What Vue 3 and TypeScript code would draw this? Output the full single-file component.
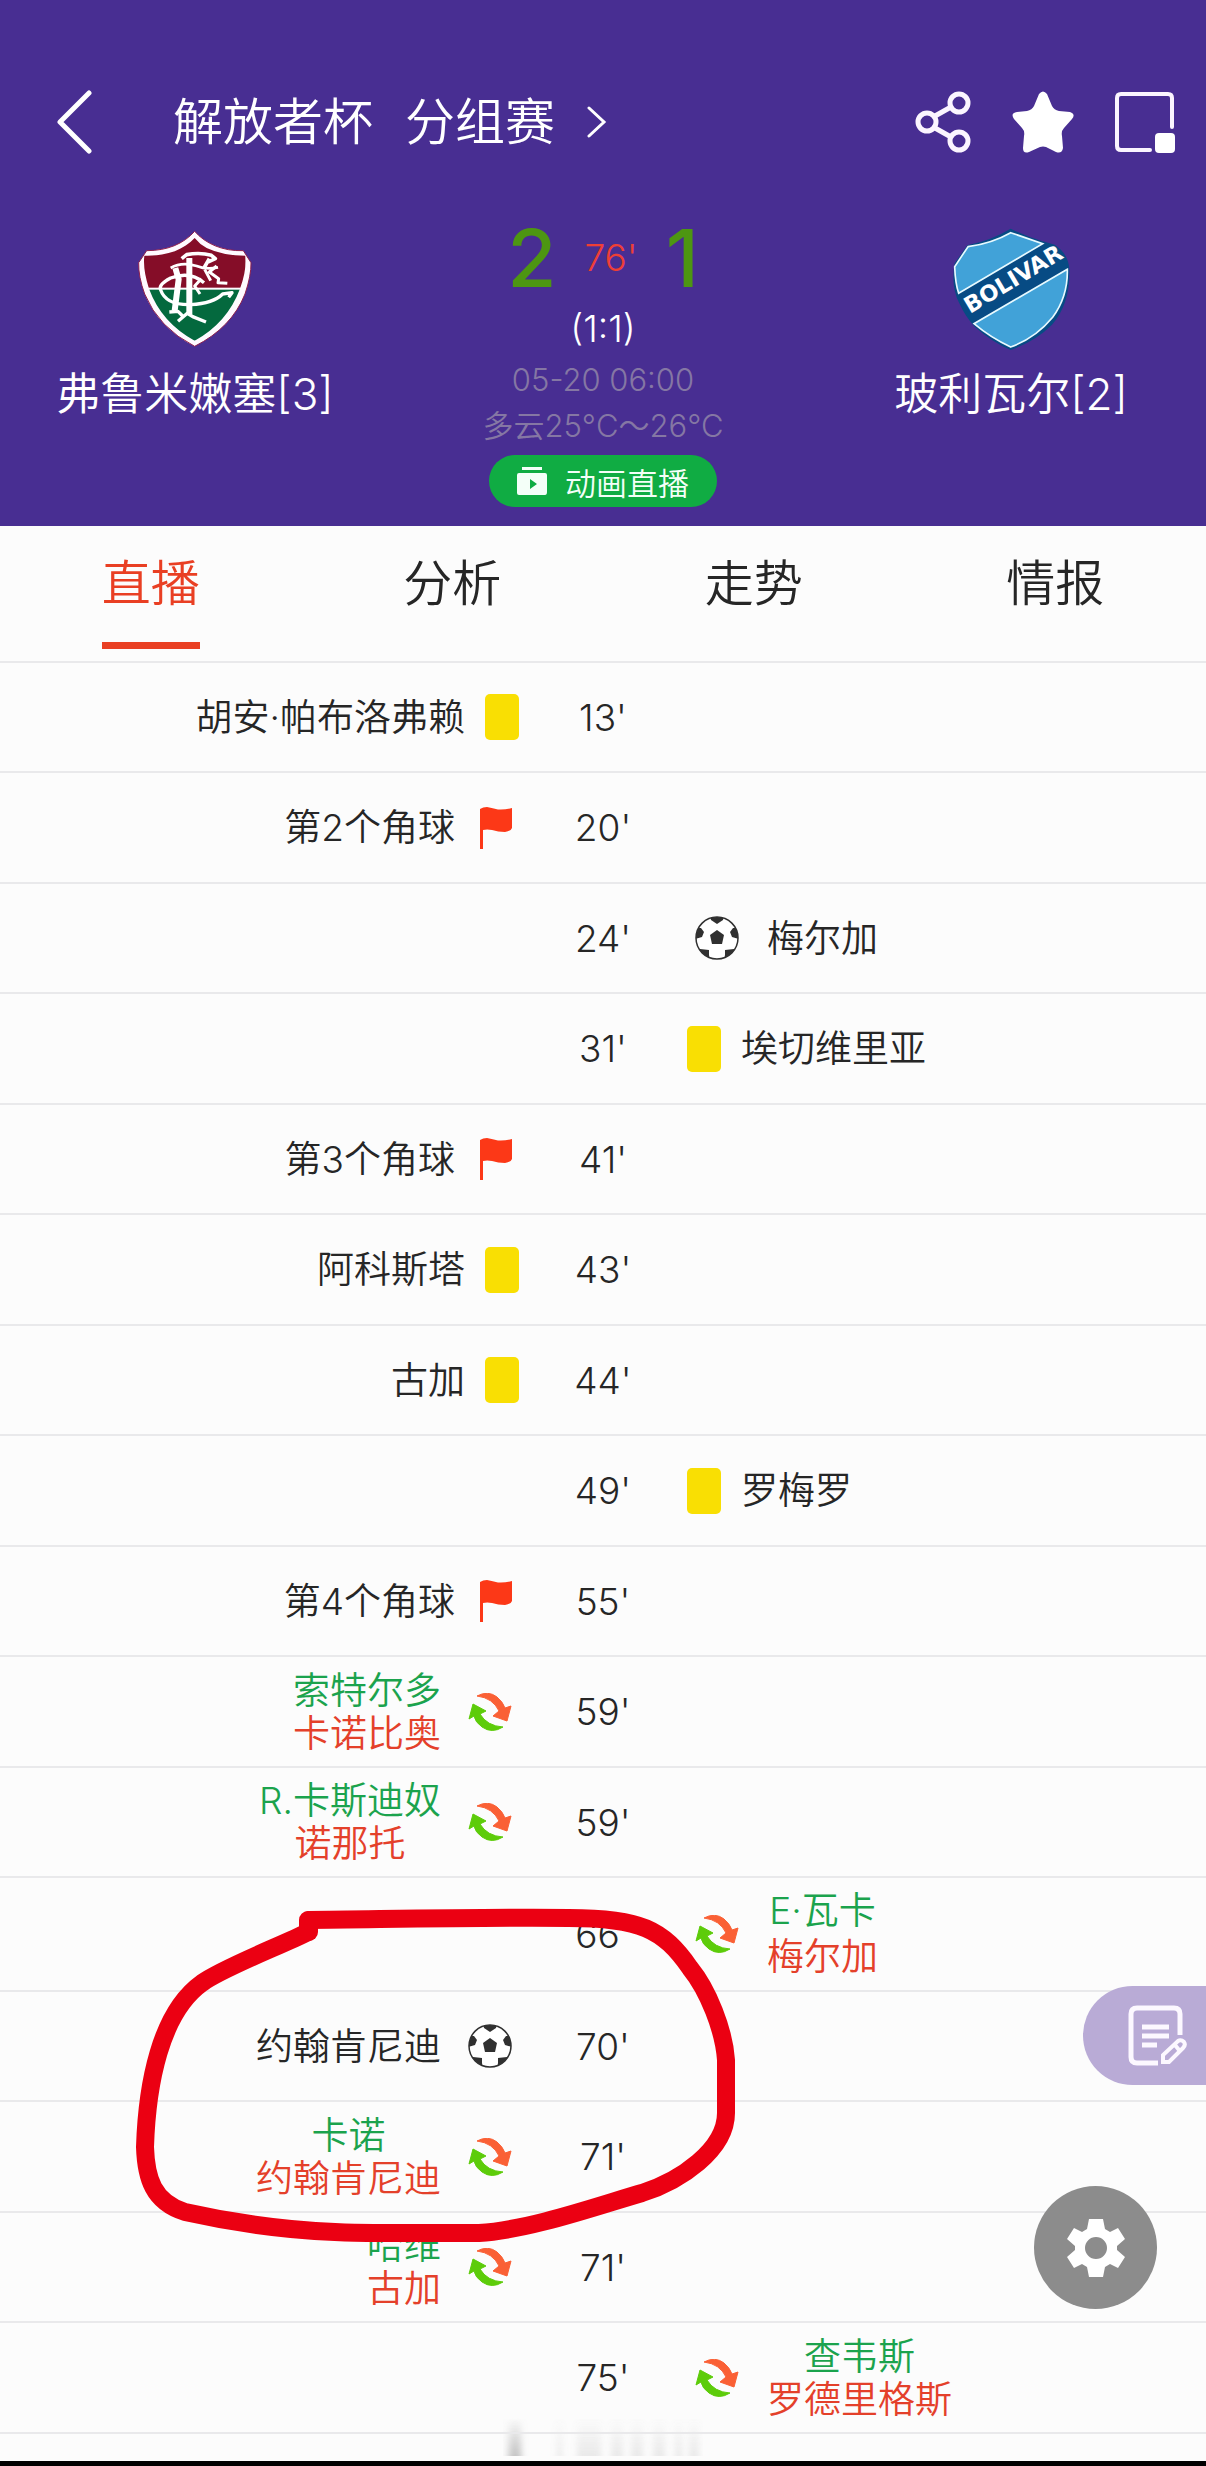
<script setup lang="ts">
import { ref } from 'vue'

type Kind = 'card' | 'corner' | 'goal' | 'sub'

interface MatchEvent {
  minute: number
  side: 'home' | 'away'
  kind: Kind
  text: string
  off?: string
  tall?: boolean
}

const tabs = ['直播', '分析', '走势', '情报']
const activeTab = ref(0)

const events: MatchEvent[] = [
  { minute: 13, side: 'home', kind: 'card', text: '胡安·帕布洛弗赖' },
  { minute: 20, side: 'home', kind: 'corner', text: '第2个角球' },
  { minute: 24, side: 'away', kind: 'goal', text: '梅尔加' },
  { minute: 31, side: 'away', kind: 'card', text: '埃切维里亚' },
  { minute: 41, side: 'home', kind: 'corner', text: '第3个角球' },
  { minute: 43, side: 'home', kind: 'card', text: '阿科斯塔' },
  { minute: 44, side: 'home', kind: 'card', text: '古加' },
  { minute: 49, side: 'away', kind: 'card', text: '罗梅罗' },
  { minute: 55, side: 'home', kind: 'corner', text: '第4个角球' },
  { minute: 59, side: 'home', kind: 'sub', text: '索特尔多', off: '卡诺比奥' },
  { minute: 59, side: 'home', kind: 'sub', text: 'R.卡斯迪奴', off: '诺那托' },
  { minute: 66, side: 'away', kind: 'sub', text: 'E·瓦卡', off: '梅尔加', tall: true },
  { minute: 70, side: 'home', kind: 'goal', text: '约翰肯尼迪' },
  { minute: 71, side: 'home', kind: 'sub', text: '卡诺', off: '约翰肯尼迪' },
  { minute: 71, side: 'home', kind: 'sub', text: '哈维', off: '古加' },
  { minute: 75, side: 'away', kind: 'sub', text: '查韦斯', off: '罗德里格斯' },
]
</script>

<template>
  <div class="page">
    <header class="hero">
      <nav class="bar">
        <button class="icon-btn back" aria-label="返回">
          <svg width="36" height="64" viewBox="0 0 36 64"><path d="M33 3 4 32 33 61" fill="none" stroke="#fff" stroke-width="5" stroke-linecap="round" stroke-linejoin="round" /></svg>
        </button>
        <a class="title" href="#">
          <span>解放者杯</span>
          <span>分组赛</span>
          <svg width="20" height="32" viewBox="0 0 20 32"><path d="M2 2 17 16 2 30" fill="none" stroke="#fff" stroke-width="3" stroke-linecap="round" /></svg>
        </a>
        <div class="tools">
          <button class="icon-btn" aria-label="分享">
            <svg width="56" height="62" viewBox="0 0 56 62" fill="none" stroke="#fbf5ff" stroke-width="5">
              <path d="M20 25 36 16M20 37 36 46" />
              <circle cx="12" cy="31" r="9" /><circle cx="44" cy="12" r="9" /><circle cx="44" cy="50" r="9" />
            </svg>
          </button>
          <button class="icon-btn" aria-label="收藏">
            <svg width="62" height="62" viewBox="0 0 62 62"><path d="M27 3Q31-2 35 3L40 15Q42 19 47 20L58 21Q64 23 60 28L52 37Q49 40 50 45L51 57Q50 63 44 61L34 56Q31 55 28 56L17 61Q11 63 11 57L12 45Q13 40 10 37L2 28Q-2 22 5 21L15 20Q20 19 22 15Z" fill="#fff" /></svg>
          </button>
          <button class="icon-btn" aria-label="小窗">
            <svg width="60" height="62" viewBox="0 0 60 62"><path d="M57 36V7Q57 3 53 3H6Q2 3 2 7V55Q2 59 6 59H35" fill="none" stroke="#fbf5ff" stroke-width="4" stroke-linecap="round" /><rect x="40" y="42" width="20" height="20" rx="4" fill="#fff" /></svg>
          </button>
        </div>
      </nav>

      <div class="match">
        <div class="team">
          <svg width="116" height="118" viewBox="411 92 348 354">
            <defs>
              <clipPath id="fluClip"><path d="M584 116C551 152 499 171 433 169Q428 210 447 268 484 369 584 424 682 370 720 268 741 210 736 169 668 169 620 146 598 134 584 116Z" /></clipPath>
            </defs>
            <path d="M584 96C550 134 502 154 440 154L416 190Q415 232 434 284 476 386 584 441 695 385 735 284 754 228 753 190L730 154C668 156 616 133 584 96Z" fill="#fffaff" stroke="#90204d" stroke-width="3" />
            <g clip-path="url(#fluClip)">
              <rect x="411" y="92" width="348" height="173" fill="#850d28" />
              <rect x="411" y="271" width="348" height="180" fill="#04693e" />
            </g>
            <g fill="none" stroke="#fff" stroke-linejoin="round">
              <path d="M568 176V346M526 206 536 240 524 334" stroke-width="18" />
              <path d="M545 178 560 166Q600 158 634 168L646 178 620 190M628 178 612 206" stroke-width="11" />
              <path d="M512 206Q545 186 590 200 620 212 654 204" stroke-width="8" />
              <path d="M508 338 534 336 548 350M534 366 562 342 578 352 618 368" stroke-width="10" />
              <path d="M612 250Q570 214 512 236 474 256 482 272 498 318 572 316 640 312 668 284L696 280 686 294" stroke-width="10" />
              <path d="M604 238 584 260 600 284M614 210 632 244M650 200 628 218 656 238 654 250 682 252" stroke-width="9" />
            </g>
          </svg>
          <span class="name">弗鲁米嫩塞[3]</span>
        </div>

        <div class="center">
          <div class="score">
            <b>2</b><span class="clock">76'</span><b>1</b>
          </div>
          <div class="half">(1:1)</div>
          <div class="meta">05-20 06:00</div>
          <div class="meta">多云25°C～26°C</div>
          <button class="live">
            <svg width="30" height="28" viewBox="0 0 30 28"><path d="M5 0H25V3H5ZM2 6H28Q30 6 30 8V25Q30 28 28 28H2Q0 28 0 26V8Q0 6 2 6ZM13 12V22L20 17Z" fill="#f4fff8" fill-rule="evenodd" /></svg>
            动画直播
          </button>
        </div>

        <div class="team">
          <svg width="118" height="122" viewBox="280 84 354 366">
            <path d="M456 86Q400 120 326 136L288 190Q276 260 302 310 320 350 348 380 400 426 456 450 530 424 580 374 636 310 632 206 628 160 588 134L552 124Q500 108 456 86Z" fill="#074b84" />
            <path d="M456 98 552 131 300 280Q290 250 288 200L328 140Q400 130 456 98Z" fill="#41a2d8" stroke="#e8faff" stroke-width="5" />
            <path d="M626 208 346 371Q396 413 456 441 530 415 582 352 628 290 626 208Z" fill="#41a2d8" stroke="#e8faff" stroke-width="5" />
            <text x="334" y="342" transform="rotate(-31 334 342)" class="crest-word">BOLIVAR</text>
          </svg>
          <span class="name">玻利瓦尔[2]</span>
        </div>
      </div>
    </header>

    <nav class="tabs">
      <button
        v-for="(tab, i) in tabs"
        :key="tab"
        class="tab"
        :class="{ active: i === activeTab }"
        @click="activeTab = i"
      >
        <span>{{ tab }}</span>
      </button>
    </nav>

    <main class="timeline">
      <ol class="rows">
        <li v-for="(ev, i) in events" :key="i" class="row" :class="[ev.side, { tall: ev.tall }]">
          <div class="entry" :class="ev.kind">
            <div class="who">
              <span :class="{ on: ev.off }">{{ ev.text }}</span>
              <span v-if="ev.off" class="off">{{ ev.off }}</span>
            </div>
            <i v-if="ev.kind === 'card'" class="yellow" />
            <svg v-else-if="ev.kind === 'corner'" width="32" height="42" viewBox="0 0 32 42"><path d="M0 2Q3 0 7 0 13 1 18 2.500 25 3 32 1V21Q31 24 25 25 18 25 12 23 7 22 3 23V42H0Z" fill="#fc3817" /></svg>
            <svg v-else-if="ev.kind === 'goal'" width="44" height="44" viewBox="0 0 44 44">
              <defs><clipPath id="ballClip"><circle cx="22" cy="22" r="21" /></clipPath></defs>
              <circle cx="22" cy="22" r="21" fill="#fff" />
              <g clip-path="url(#ballClip)" fill="#303030">
                <path d="M22 14 29 19 27 28H17L15 19Z" />
                <path d="M15 0H29L28 4 22 8 16 4Z" />
                <path d="M0 12 6 12 9 16 7 21 0 23ZM44 12 38 12 35 16 37 21 44 23ZM5 33 14 34 14 39 15 44 5 42ZM39 33 30 34 30 39 29 44 39 42Z" />
              </g>
              <circle cx="22" cy="22" r="21" fill="none" stroke="#303030" stroke-width="1.500" />
            </svg>
            <svg v-else width="44" height="38" viewBox="0 0 44 38">
              <path d="M9 3Q20-3 29 4 35 9 37 15L43 13 39 28 25 23 31 18Q25 5 9 3Z" fill="#fa6035" stroke="#fa6035" stroke-linejoin="round" />
              <path d="M35 34Q24 41 14 34 7 29 6 23L1 26 5 11 18 18 12 21Q19 33 35 34Z" fill="#5dcc0a" stroke="#5dcc0a" stroke-linejoin="round" />
            </svg>
          </div>
          <time class="minute">{{ ev.minute }}'</time>
        </li>
      </ol>

      <svg class="marker" width="620" height="360" viewBox="130 1900 620 360">
        <path d="M308 1932C285 1944 222 1968 202 1983 160 2013 147 2085 145 2147 146 2178 153 2202 185 2212 225 2221 270 2227 291 2229 330 2233 360 2233 398 2233H479C530 2230 600 2205 642 2193 680 2181 726 2150 726 2113V2060C724 2030 708 1990 690 1968 663 1929 640 1918 569 1918 500 1917 400 1919 308 1920Z" />
        <path d="M309 1920V1932" />
      </svg>
    </main>

    <footer class="foot">
      <svg class="ghost" width="200" height="40" viewBox="0 0 200 40" aria-hidden="true">
        <defs>
          <linearGradient id="fade" x1="0" y1="0" x2="0" y2="1"><stop offset="0" stop-color="#999" stop-opacity="0" /><stop offset="1" stop-color="#999" stop-opacity="0.350" /></linearGradient>
          <filter id="soft"><feGaussianBlur stdDeviation="3 0" /></filter>
        </defs>
        <g fill="url(#fade)" filter="url(#soft)">
          <rect x="4" width="15" height="38" /><rect x="8" width="9" height="38" />
          <g opacity="0.550">
            <rect x="54" width="5" height="38" /><rect x="74" width="24" height="38" /><rect x="108" width="12" height="38" />
            <rect x="128" width="12" height="38" /><rect x="150" width="12" height="38" /><rect x="172" width="7" height="38" /><rect x="186" width="10" height="38" />
          </g>
        </g>
      </svg>
    </footer>

    <button class="note" aria-label="笔记">
      <svg width="60" height="62" viewBox="0 0 60 62" fill="none" stroke="#fcf8ff" stroke-width="5">
        <path d="M52 30V9Q52 3 46 3H9Q3 3 3 9V52Q3 58 9 58H30" />
        <path d="M14 22H41M14 31H41M14 40H29" />
        <path d="M35 57V50L50 36Q53 34 56 37 58 40 55 43L41 57ZM47 40 51 45" stroke-width="4" />
      </svg>
    </button>
    <button class="gear" aria-label="设置">
      <svg width="58" height="60" viewBox="0 0 58 60"><path d="M22 1H36L38 11 43 14 51 10 58 21 50 28V32L58 39 51 50 43 46 38 49 36 59H22L20 49 15 46 7 50 0 39 8 32V28L0 21 7 10 15 14 20 11ZM29 19A11 11 0 1 0 29 41A11 11 0 1 0 29 19Z" fill="#fff" fill-rule="evenodd" /></svg>
    </button>
  </div>
</template>

<style>
body {
  background: #fcfcfc;
}
</style>

<style scoped>
.page {
  position: relative;
  background: #fcfcfc;
  color: #262626;
  font-family: Inter, "Noto Sans CJK SC", sans-serif;
  font-weight: 350;
}

button {
  border: 0;
  padding: 0;
  background: none;
  font: inherit;
  color: inherit;
}

svg {
  display: block;
  flex: none;
}

.hero {
  padding-top: 90px;
  height: 436px;
  background: #482e92;
  color: #fff;
}

.bar {
  display: flex;
  align-items: center;
  height: 64px;
  padding: 0 31px 0 56px;
}

.title {
  display: flex;
  align-items: center;
  gap: 32px;
  margin-left: 81px;
  color: #fff;
  font-size: 50px;
  line-height: 64px;
  text-decoration: none;
}

.tools {
  display: flex;
  align-items: center;
  gap: 41px;
  margin-left: auto;
}

.match {
  display: flex;
  justify-content: space-between;
  padding-top: 74px;
}

.team {
  display: flex;
  flex-direction: column;
  align-items: center;
  width: 390px;
}

.team svg {
  height: 122px;
}

.name {
  margin-top: 16px;
  font-size: 44px;
  line-height: 56px;
}

.crest-word {
  font: 700 68px "DejaVu Sans", sans-serif;
  fill: #fff;
}

.center {
  display: flex;
  flex: 1;
  flex-direction: column;
  align-items: center;
}

.score {
  display: flex;
  align-items: center;
  justify-content: center;
  gap: 28px;
  height: 60px;
  color: #4d9612;
  font-size: 80px;
  line-height: 60px;
}

.score b {
  font-weight: 500;
}

.clock {
  color: #ee3f36;
  font-size: 37px;
}

.half {
  margin-top: 21px;
  font-size: 37px;
  line-height: 40px;
}

.meta {
  font-size: 31px;
  line-height: 46px;
  color: #8577a4;
}

.half + .meta {
  margin-top: 8px;
}

.live {
  display: flex;
  align-items: center;
  justify-content: center;
  gap: 18px;
  width: 228px;
  height: 52px;
  margin-top: 6px;
  border-radius: 26px;
  background: #10ac43;
  color: #f4fff8;
  font-size: 31px;
}

.tabs {
  display: flex;
  height: 135px;
  border-bottom: 2px solid #e9e9eb;
}

.tab {
  display: flex;
  flex: 1;
  justify-content: center;
  align-items: flex-start;
  font-size: 49px;
  line-height: 116px;
}

.tab span {
  height: 116px;
  border-bottom: 7px solid transparent;
}

.tab.active {
  color: #e93f23;
}

.tab.active span {
  border-color: #e93f23;
}

.timeline {
  position: relative;
}

.rows {
  margin: 0;
  padding: 0;
  list-style: none;
}

.row {
  display: grid;
  grid-template-columns: 1fr 168px 1fr;
  align-items: center;
  box-sizing: border-box;
  height: 110px;
  border-bottom: 2px solid #e9e9eb;
}

.row:nth-child(even) {
  height: 111px;
}

.row.tall {
  height: 114px;
}

.minute {
  grid-column: 2;
  grid-row: 1;
  font-size: 37px;
  text-align: center;
}

.entry {
  display: flex;
  grid-row: 1;
  grid-column: 1;
  align-items: center;
  justify-content: flex-end;
  gap: 20px;
}

.away .entry {
  grid-column: 3;
  flex-direction: row-reverse;
}

.entry svg {
  margin: 0 7px;
}

.entry.corner {
  gap: 18px;
}

.away .entry svg {
  margin: 0 8px;
}

.yellow {
  width: 34px;
  height: 46px;
  border-radius: 5px;
  background: #f9df03;
}

.who {
  display: flex;
  flex-direction: column;
  align-items: center;
  font-size: 37px;
  line-height: 43px;
}

.tall .who {
  line-height: 46px;
}

.on {
  color: #1ba34d;
}

.off {
  color: #e4402a;
}

.marker {
  position: absolute;
  top: 1237px;
  left: calc(50% - 473px);
  fill: none;
  stroke: #eb0012;
  stroke-width: 18px;
  stroke-linecap: round;
  stroke-linejoin: round;
  pointer-events: none;
}

.foot {
  display: flex;
  justify-content: center;
  height: 27px;
  border-bottom: 5px solid #000;
}

.ghost {
  margin-top: -16px;
}

.note {
  position: absolute;
  right: 0;
  bottom: 381px;
  display: flex;
  align-items: center;
  width: 123px;
  height: 99px;
  padding-left: 45px;
  border-radius: 50px 0 0 50px;
  background: #b9abd6;
}

.gear {
  position: absolute;
  right: 49px;
  bottom: 157px;
  display: flex;
  align-items: center;
  justify-content: center;
  width: 123px;
  height: 123px;
  border-radius: 50%;
  background: #8c8c8c;
}
</style>
